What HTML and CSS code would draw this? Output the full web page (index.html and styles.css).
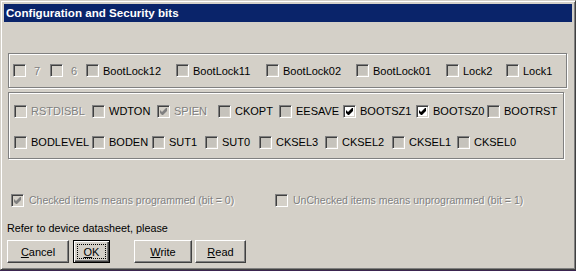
FILE: index.html
```html
<!DOCTYPE html>
<html lang="en"><head><meta http-equiv="Content-Type" content="text/html; charset=UTF-8">
  <title>Configuration and Security bits</title>
<link rel="stylesheet" href="styles.css"></head>
<body>
<div class="window">
  <div class="titlebar">Configuration and Security bits</div>

  <!-- lock bits -->
  <div class="group g1">
    <div class="row r1">
      <label class="item"><span class="cb dis"></span><span class="txt off pad">7</span></label>
      <label class="item"><span class="cb dis"></span><span class="txt off pad">6</span></label>
      <label class="item"><span class="cb"></span><span class="txt">BootLock12</span></label>
      <label class="item"><span class="cb"></span><span class="txt">BootLock11</span></label>
      <label class="item"><span class="cb"></span><span class="txt">BootLock02</span></label>
      <label class="item"><span class="cb"></span><span class="txt">BootLock01</span></label>
      <label class="item"><span class="cb"></span><span class="txt">Lock2</span></label>
      <label class="item"><span class="cb"></span><span class="txt">Lock1</span></label>
    </div>
  </div>

  <!-- fuse bits -->
  <div class="group g2">
    <div class="row r2">
      <label class="item"><span class="cb dis"></span><span class="txt off">RSTDISBL</span></label>
      <label class="item"><span class="cb"></span><span class="txt">WDTON</span></label>
      <label class="item"><span class="cb dis"><svg viewBox="0 0 11 11" width="11" height="11"><polygon points="2,4 4,6 8,2 9,2 9,5 5,9 4,9 2,7" fill="#808080"/></svg></span><span class="txt off">SPIEN</span></label>
      <label class="item"><span class="cb"></span><span class="txt">CKOPT</span></label>
      <label class="item"><span class="cb"></span><span class="txt">EESAVE</span></label>
      <label class="item"><span class="cb on"><svg viewBox="0 0 11 11" width="11" height="11"><polygon points="2,4 4,6 8,2 9,2 9,5 5,9 4,9 2,7" fill="#000"/></svg></span><span class="txt">BOOTSZ1</span></label>
      <label class="item"><span class="cb on"><svg viewBox="0 0 11 11" width="11" height="11"><polygon points="2,4 4,6 8,2 9,2 9,5 5,9 4,9 2,7" fill="#000"/></svg></span><span class="txt">BOOTSZ0</span></label>
      <label class="item"><span class="cb"></span><span class="txt">BOOTRST</span></label>
    </div>
    <div class="row r3">
      <label class="item"><span class="cb"></span><span class="txt">BODLEVEL</span></label>
      <label class="item"><span class="cb"></span><span class="txt">BODEN</span></label>
      <label class="item"><span class="cb"></span><span class="txt">SUT1</span></label>
      <label class="item"><span class="cb"></span><span class="txt">SUT0</span></label>
      <label class="item"><span class="cb"></span><span class="txt">CKSEL3</span></label>
      <label class="item"><span class="cb"></span><span class="txt">CKSEL2</span></label>
      <label class="item"><span class="cb"></span><span class="txt">CKSEL1</span></label>
      <label class="item"><span class="cb"></span><span class="txt">CKSEL0</span></label>
    </div>
  </div>

  <div class="row legend">
    <label class="item"><span class="cb dis"><svg viewBox="0 0 11 11" width="11" height="11"><polygon points="2,4 4,6 8,2 9,2 9,5 5,9 4,9 2,7" fill="#808080"/></svg></span><span class="txt off">Checked items means programmed (bit = 0)</span></label>
    <label class="item"><span class="cb dis"></span><span class="txt off">UnChecked items means unprogrammed (bit = 1)</span></label>
  </div>

  <p class="note">Refer to device datasheet, please</p>

  <div class="buttons">
    <button class="btn cancel"><u>C</u>ancel</button>
    <button class="btn ok default"><u>O</u>K</button>
    <button class="btn write"><u>W</u>rite</button>
    <button class="btn read"><u>R</u>ead</button>
  </div>
</div>
</body></html>
```
FILE: styles.css
```css
html,body{
  margin: 0;
  padding: 0;
  background: #3b2450;
}
body{
  font-family: "Liberation Sans", Arial, sans-serif;
  font-size: 11px;
  color: #000;
}
.window{
  box-sizing: border-box;
  width: 576px;
  height: 270px;
  background: #d4d0c8;
  border: 1px solid;
  border-color: #d4d0c8 #404040 #404040 #d4d0c8;
  box-shadow: inset 1px 1px #fff, inset -1px -1px #808080;
  padding: 3px;
  display: flex;
  flex-direction: column;
}
.titlebar{
  height: 18px;
  line-height: 18px;
  background: #0a246a;
  color: #fff;
  font-weight: bold;
  font-size: 11.6px;
  padding-left: 2px;
  white-space: nowrap;
}

/* group boxes */
.group{
  box-sizing: border-box;
  margin-left: 4px;
  border: 1px solid #808080;
  box-shadow: inset 1px 1px #fff, 1px 1px #fff;
}
.g1{
  margin-top: 31px;
  width: 559px;
  height: 35px;
  padding-left: 4px;
  display: flex;
  align-items: center;
}
.g2{
  margin-top: 4px;
  width: 556px;
  height: 67px;
  padding: 10px 0 0 5px;
  display: flex;
  flex-direction: column;
  gap: 15px;
}
.row{
  display: grid;
  align-items: center;
  height: 16px;
}
.r1{ grid-template-columns: 37px 36px 90px 90px 90px 90px 60px auto; }
.r2{ grid-template-columns: 78px 65px 61px 61px 64px 73px 71px auto; }
.r3{ grid-template-columns: 78px 60px 53px 54px 66px 67px 65px auto; }

.item{
  display: flex;
  align-items: center;
  gap: 4px;
  white-space: nowrap;
  line-height: 16px;
}
.txt.off{
  color: #808080;
  text-shadow: 1px 1px #fff;
}
.txt.pad{ margin-left: 4px; }

/* classic checkbox */
.cb{
  box-sizing: border-box;
  width: 13px;
  height: 13px;
  flex: none;
  border: 1px solid;
  border-color: #808080 #fff #fff #808080;
  box-shadow: inset 1px 1px #404040, inset -1px -1px #d4d0c8;
  background: #c6c3bc;
  display: flex;
}
.cb.on{ background: #fff; }
.cb.dis{ background: #d4d0c8; }
.cb svg{ display: block; }

.legend{
  margin-top: 33px;
  padding-left: 7px;
  grid-template-columns: 264px auto;
}
.legend .item{ gap: 5px; }
.legend .txt{ font-size: 10.5px; }

.note{
  margin: 14px 0 0 3px;
  line-height: 13px;
  font-size: 10.8px;
}

/* buttons */
.buttons{
  margin: 5px 0 0 3px;
  display: flex;
}
.btn{
  box-sizing: border-box;
  height: 23px;
  padding: 0;
  background: #d4d0c8;
  border: 1px solid;
  border-color: #fff #404040 #404040 #fff;
  box-shadow: inset -1px -1px #808080;
  font-family: "Liberation Sans", Arial, sans-serif;
  font-size: 11px;
  color: #000;
}
.cancel{ width: 62px; }
.ok{ width: 37px; margin-left: 4px; }
.write{ width: 58px; margin-left: 24px; }
.read{ width: 51px; margin-left: 3px; }
.btn.default{
  border-color: #000;
  box-shadow: inset 1px 1px #fff, inset -1px -1px #404040, inset -2px -2px #808080;
  outline: 1px dotted #000;
  outline-offset: -5px;
}
```
